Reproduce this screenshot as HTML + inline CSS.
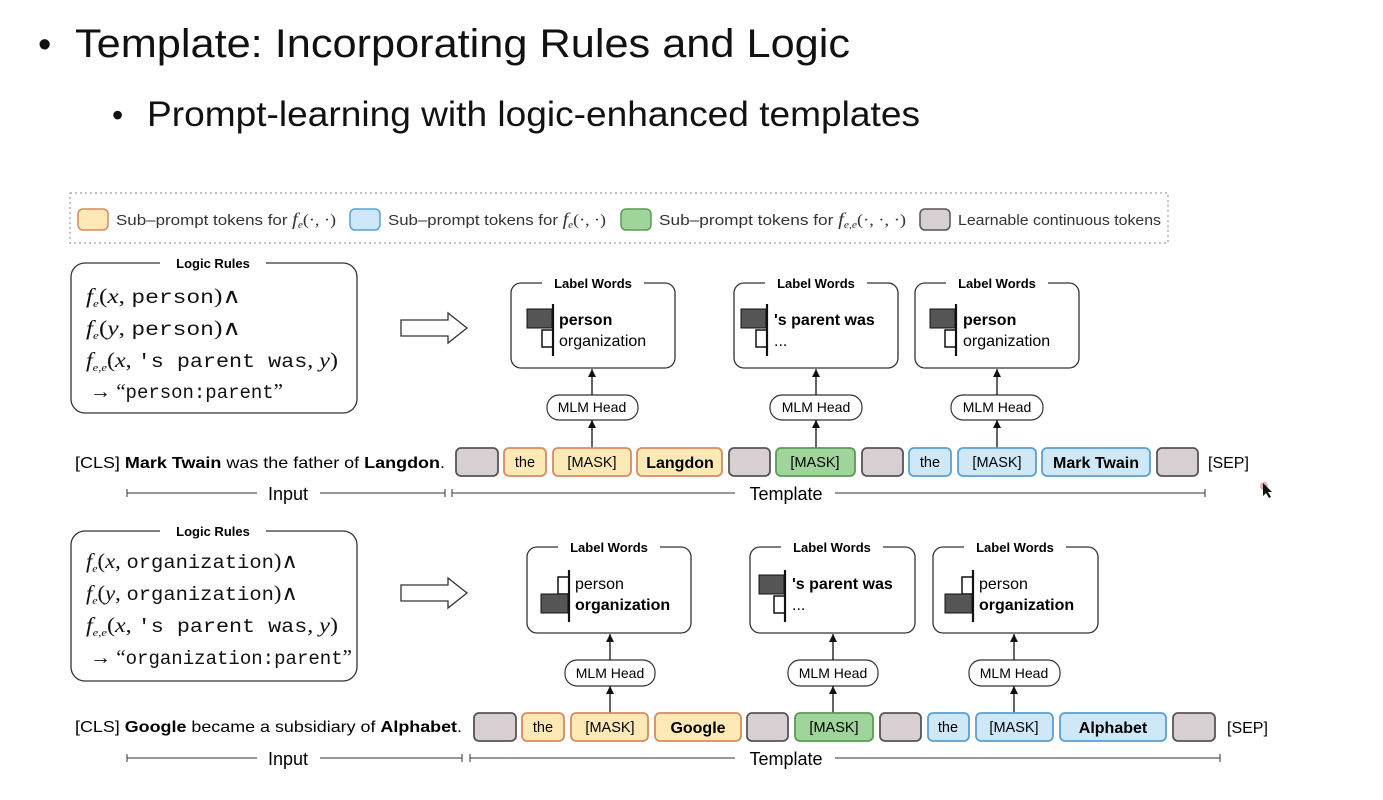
<!DOCTYPE html>
<html><head><meta charset="utf-8"><style>
html,body{margin:0;padding:0;background:#fff;width:1383px;height:800px;overflow:hidden}
svg{display:block}
.s{font-family:"Liberation Sans",sans-serif}
.m{font-family:"Liberation Mono",monospace}
.r{font-family:"Liberation Serif",serif}
</style></head><body>
<svg width="1383" height="800" viewBox="0 0 1383 800" xmlns="http://www.w3.org/2000/svg">
<defs>
<marker id="ah" markerWidth="10" markerHeight="10" refX="8" refY="4" orient="auto" markerUnits="userSpaceOnUse"><path d="M0,0 L8,4 L0,8 Z" fill="#111"/></marker>
</defs>
<g class="s" fill="#111">
<text x="38" y="57" font-size="38">•</text>
<text x="75" y="57" font-size="40" textLength="775" lengthAdjust="spacingAndGlyphs">Template: Incorporating Rules and Logic</text>
<text x="112" y="126" font-size="32">•</text>
<text x="147" y="126" font-size="35" textLength="773" lengthAdjust="spacingAndGlyphs">Prompt-learning with logic-enhanced templates</text>
</g>

<!-- legend -->
<rect x="70" y="193" width="1098" height="50" fill="none" stroke="#888" stroke-dasharray="2,3"/>
<g class="s" font-size="15" fill="#333">
<rect x="78" y="209" width="30" height="21" rx="5" fill="#fde9b5" stroke="#d98a5e" stroke-width="1.5"/>
<text x="116" y="225" textLength="220" lengthAdjust="spacingAndGlyphs">Sub–prompt tokens for <tspan class="r" font-style="italic" font-size="18">f</tspan><tspan class="r" font-style="italic" font-size="10" dy="3">e</tspan><tspan dy="-3" class="r" font-size="16">(·, ·)</tspan></text>
<rect x="350" y="209" width="30" height="21" rx="5" fill="#cfe8f7" stroke="#5a9fd4" stroke-width="1.5"/>
<text x="388" y="225" textLength="218" lengthAdjust="spacingAndGlyphs">Sub–prompt tokens for <tspan class="r" font-style="italic" font-size="18">f</tspan><tspan class="r" font-style="italic" font-size="10" dy="3">e</tspan><tspan dy="-3" class="r" font-size="16">(·, ·)</tspan></text>
<rect x="621" y="209" width="30" height="21" rx="5" fill="#9fd49a" stroke="#5a9a55" stroke-width="1.5"/>
<text x="659" y="225" textLength="247" lengthAdjust="spacingAndGlyphs">Sub–prompt tokens for <tspan class="r" font-style="italic" font-size="18">f</tspan><tspan class="r" font-style="italic" font-size="10" dy="3">e,e</tspan><tspan dy="-3" class="r" font-size="16">(·, ·, ·)</tspan></text>
<rect x="920" y="209" width="30" height="21" rx="5" fill="#d8cfd3" stroke="#555" stroke-width="1.5"/>
<text x="958" y="225" textLength="203" lengthAdjust="spacingAndGlyphs">Learnable continuous tokens</text>
</g>

<!-- ===== TOP HALF ===== -->
<rect x="71" y="263" width="286" height="150" rx="14" fill="none" stroke="#333" stroke-width="1.3"/>
<rect x="160" y="255" width="106" height="16" fill="#fff"/>
<text x="213" y="268" class="s" font-size="13" font-weight="bold" text-anchor="middle">Logic Rules</text>
<g font-size="21" fill="#111">
<text x="86" y="303" textLength="155" lengthAdjust="spacingAndGlyphs"><tspan class="r" font-style="italic">f</tspan><tspan class="r" font-style="italic" font-size="11" dy="4">e</tspan><tspan class="r" dy="-4">(</tspan><tspan class="r" font-style="italic">x</tspan><tspan class="r">, </tspan><tspan class="m" font-size="19">person</tspan><tspan class="r">)∧</tspan></text>
<text x="86" y="335" textLength="155" lengthAdjust="spacingAndGlyphs"><tspan class="r" font-style="italic">f</tspan><tspan class="r" font-style="italic" font-size="11" dy="4">e</tspan><tspan class="r" dy="-4">(</tspan><tspan class="r" font-style="italic">y</tspan><tspan class="r">, </tspan><tspan class="m" font-size="19">person</tspan><tspan class="r">)∧</tspan></text>
<text x="86" y="367" textLength="252" lengthAdjust="spacingAndGlyphs"><tspan class="r" font-style="italic">f</tspan><tspan class="r" font-style="italic" font-size="11" dy="4">e,e</tspan><tspan class="r" dy="-4">(</tspan><tspan class="r" font-style="italic">x</tspan><tspan class="r">, </tspan><tspan class="m" font-size="19">'s parent was</tspan><tspan class="r">, </tspan><tspan class="r" font-style="italic">y</tspan><tspan class="r">)</tspan></text>
<text x="90" y="398" textLength="193" lengthAdjust="spacingAndGlyphs"><tspan class="r">→ “</tspan><tspan class="m" font-size="19">person:parent</tspan><tspan class="r">”</tspan></text>
</g>
<path d="M401,320 H448 V313 L467,328 L448,343 V336 H401 Z" fill="#fff" stroke="#333" stroke-width="1.3"/>

<g class="s">
<rect x="511" y="283" width="164" height="85" rx="10" fill="none" stroke="#333" stroke-width="1.3"/>
<rect x="542" y="275" width="102" height="16" fill="#fff"/>
<text x="593" y="288" font-size="13" font-weight="bold" text-anchor="middle">Label Words</text>
<rect x="527" y="309" width="25" height="19" fill="#555" stroke="#111"/>
<rect x="542" y="330" width="11" height="17" fill="#fff" stroke="#111" stroke-width="1.5"/>
<line x1="553" y1="304" x2="553" y2="356" stroke="#111" stroke-width="2.2"/>
<text x="559" y="325" font-size="16" font-weight="bold">person</text>
<text x="559" y="346" font-size="16">organization</text>

<rect x="734" y="283" width="164" height="85" rx="10" fill="none" stroke="#333" stroke-width="1.3"/>
<rect x="765" y="275" width="102" height="16" fill="#fff"/>
<text x="816" y="288" font-size="13" font-weight="bold" text-anchor="middle">Label Words</text>
<rect x="741" y="309" width="25" height="19" fill="#555" stroke="#111"/>
<rect x="756" y="330" width="11" height="17" fill="#fff" stroke="#111" stroke-width="1.5"/>
<line x1="767" y1="304" x2="767" y2="356" stroke="#111" stroke-width="2.2"/>
<text x="774" y="325" font-size="16" font-weight="bold">'s parent was</text>
<text x="774" y="346" font-size="16">...</text>

<rect x="915" y="283" width="164" height="85" rx="10" fill="none" stroke="#333" stroke-width="1.3"/>
<rect x="946" y="275" width="102" height="16" fill="#fff"/>
<text x="997" y="288" font-size="13" font-weight="bold" text-anchor="middle">Label Words</text>
<rect x="930" y="309" width="25" height="19" fill="#555" stroke="#111"/>
<rect x="945" y="330" width="11" height="17" fill="#fff" stroke="#111" stroke-width="1.5"/>
<line x1="956" y1="304" x2="956" y2="356" stroke="#111" stroke-width="2.2"/>
<text x="963" y="325" font-size="16" font-weight="bold">person</text>
<text x="963" y="346" font-size="16">organization</text>

<g font-size="14">
<rect x="547" y="395" width="91" height="25" rx="12" fill="#fff" stroke="#333" stroke-width="1.2"/>
<text x="592" y="412" text-anchor="middle">MLM Head</text>
<rect x="770" y="395" width="92" height="25" rx="12" fill="#fff" stroke="#333" stroke-width="1.2"/>
<text x="816" y="412" text-anchor="middle">MLM Head</text>
<rect x="951" y="395" width="92" height="25" rx="12" fill="#fff" stroke="#333" stroke-width="1.2"/>
<text x="997" y="412" text-anchor="middle">MLM Head</text>
</g>
<g stroke="#111" stroke-width="1.3" marker-end="url(#ah)">
<line x1="592" y1="395" x2="592" y2="369"/><line x1="592" y1="448" x2="592" y2="420"/>
<line x1="816" y1="395" x2="816" y2="369"/><line x1="816" y1="448" x2="816" y2="420"/>
<line x1="997" y1="395" x2="997" y2="369"/><line x1="997" y1="448" x2="997" y2="420"/>
</g>

<text x="75" y="468" font-size="16" textLength="370" lengthAdjust="spacingAndGlyphs">[CLS]  <tspan font-weight="bold">Mark Twain</tspan> was the father of <tspan font-weight="bold">Langdon</tspan>.</text>
<g stroke-width="1.8">
<rect x="456" y="448" width="42" height="28" rx="5" fill="#d8cfd3" stroke="#555"/>
<rect x="504" y="448" width="42" height="28" rx="5" fill="#fde9b5" stroke="#d98a5e"/>
<rect x="553" y="448" width="78" height="28" rx="5" fill="#fde9b5" stroke="#d98a5e"/>
<rect x="637" y="448" width="85" height="28" rx="5" fill="#fde9b5" stroke="#d98a5e"/>
<rect x="729" y="448" width="41" height="28" rx="5" fill="#d8cfd3" stroke="#555"/>
<rect x="776" y="448" width="79" height="28" rx="5" fill="#9fd49a" stroke="#5a9a55"/>
<rect x="862" y="448" width="41" height="28" rx="5" fill="#d8cfd3" stroke="#555"/>
<rect x="909" y="448" width="42" height="28" rx="5" fill="#cfe8f7" stroke="#5a9fd4"/>
<rect x="958" y="448" width="78" height="28" rx="5" fill="#cfe8f7" stroke="#5a9fd4"/>
<rect x="1042" y="448" width="108" height="28" rx="5" fill="#cfe8f7" stroke="#5a9fd4"/>
<rect x="1157" y="448" width="41" height="28" rx="5" fill="#d8cfd3" stroke="#555"/>
</g>
<g font-size="14.5" text-anchor="middle">
<text x="525" y="467">the</text><text x="592" y="467">[MASK]</text>
<text x="680" y="468" font-size="16" font-weight="bold">Langdon</text>
<text x="815" y="467">[MASK]</text><text x="930" y="467">the</text><text x="997" y="467">[MASK]</text>
<text x="1096" y="468" font-size="16" font-weight="bold">Mark Twain</text>
</g>
<text x="1208" y="468" font-size="16">[SEP]</text>
<g stroke="#333" stroke-width="1">
<line x1="127" y1="493" x2="257" y2="493"/><line x1="127" y1="489" x2="127" y2="497"/>
<line x1="320" y1="493" x2="445" y2="493"/><line x1="445" y1="489" x2="445" y2="497"/>
<line x1="452" y1="493" x2="735" y2="493"/><line x1="452" y1="489" x2="452" y2="497"/>
<line x1="835" y1="493" x2="1205" y2="493"/><line x1="1205" y1="489" x2="1205" y2="497"/>
</g>
<text x="288" y="500" font-size="18" text-anchor="middle">Input</text>
<text x="786" y="500" font-size="18" text-anchor="middle">Template</text>
</g>

<!-- ===== BOTTOM HALF ===== -->
<rect x="71" y="531" width="286" height="150" rx="14" fill="none" stroke="#333" stroke-width="1.3"/>
<rect x="160" y="523" width="106" height="16" fill="#fff"/>
<text x="213" y="536" class="s" font-size="13" font-weight="bold" text-anchor="middle">Logic Rules</text>
<g font-size="21" fill="#111">
<text x="86" y="568" textLength="212" lengthAdjust="spacingAndGlyphs"><tspan class="r" font-style="italic">f</tspan><tspan class="r" font-style="italic" font-size="11" dy="4">e</tspan><tspan class="r" dy="-4">(</tspan><tspan class="r" font-style="italic">x</tspan><tspan class="r">, </tspan><tspan class="m" font-size="19">organization</tspan><tspan class="r">)∧</tspan></text>
<text x="86" y="600" textLength="212" lengthAdjust="spacingAndGlyphs"><tspan class="r" font-style="italic">f</tspan><tspan class="r" font-style="italic" font-size="11" dy="4">e</tspan><tspan class="r" dy="-4">(</tspan><tspan class="r" font-style="italic">y</tspan><tspan class="r">, </tspan><tspan class="m" font-size="19">organization</tspan><tspan class="r">)∧</tspan></text>
<text x="86" y="632" textLength="252" lengthAdjust="spacingAndGlyphs"><tspan class="r" font-style="italic">f</tspan><tspan class="r" font-style="italic" font-size="11" dy="4">e,e</tspan><tspan class="r" dy="-4">(</tspan><tspan class="r" font-style="italic">x</tspan><tspan class="r">, </tspan><tspan class="m" font-size="19">'s parent was</tspan><tspan class="r">, </tspan><tspan class="r" font-style="italic">y</tspan><tspan class="r">)</tspan></text>
<text x="90" y="664" textLength="262" lengthAdjust="spacingAndGlyphs"><tspan class="r">→ “</tspan><tspan class="m" font-size="19">organization:parent</tspan><tspan class="r">”</tspan></text>
</g>
<path d="M401,585 H448 V578 L467,593 L448,608 V601 H401 Z" fill="#fff" stroke="#333" stroke-width="1.3"/>

<g class="s">
<rect x="527" y="547" width="164" height="86" rx="10" fill="none" stroke="#333" stroke-width="1.3"/>
<rect x="558" y="539" width="102" height="16" fill="#fff"/>
<text x="609" y="552" font-size="13" font-weight="bold" text-anchor="middle">Label Words</text>
<rect x="558" y="577" width="11" height="17" fill="#fff" stroke="#111" stroke-width="1.5"/>
<rect x="541" y="594" width="27" height="19" fill="#555" stroke="#111"/>
<line x1="569" y1="570" x2="569" y2="622" stroke="#111" stroke-width="2.2"/>
<text x="575" y="589" font-size="16">person</text>
<text x="575" y="610" font-size="16" font-weight="bold">organization</text>

<rect x="750" y="547" width="165" height="86" rx="10" fill="none" stroke="#333" stroke-width="1.3"/>
<rect x="781" y="539" width="102" height="16" fill="#fff"/>
<text x="832" y="552" font-size="13" font-weight="bold" text-anchor="middle">Label Words</text>
<rect x="759" y="575" width="25" height="19" fill="#555" stroke="#111"/>
<rect x="774" y="596" width="11" height="17" fill="#fff" stroke="#111" stroke-width="1.5"/>
<line x1="785" y1="570" x2="785" y2="622" stroke="#111" stroke-width="2.2"/>
<text x="792" y="589" font-size="16" font-weight="bold">'s parent was</text>
<text x="792" y="610" font-size="16">...</text>

<rect x="933" y="547" width="165" height="86" rx="10" fill="none" stroke="#333" stroke-width="1.3"/>
<rect x="964" y="539" width="102" height="16" fill="#fff"/>
<text x="1015" y="552" font-size="13" font-weight="bold" text-anchor="middle">Label Words</text>
<rect x="962" y="577" width="11" height="17" fill="#fff" stroke="#111" stroke-width="1.5"/>
<rect x="945" y="594" width="27" height="19" fill="#555" stroke="#111"/>
<line x1="973" y1="570" x2="973" y2="622" stroke="#111" stroke-width="2.2"/>
<text x="979" y="589" font-size="16">person</text>
<text x="979" y="610" font-size="16" font-weight="bold">organization</text>

<g font-size="14">
<rect x="565" y="660" width="90" height="26" rx="12" fill="#fff" stroke="#333" stroke-width="1.2"/>
<text x="610" y="678" text-anchor="middle">MLM Head</text>
<rect x="788" y="660" width="90" height="26" rx="12" fill="#fff" stroke="#333" stroke-width="1.2"/>
<text x="833" y="678" text-anchor="middle">MLM Head</text>
<rect x="969" y="660" width="91" height="26" rx="12" fill="#fff" stroke="#333" stroke-width="1.2"/>
<text x="1014" y="678" text-anchor="middle">MLM Head</text>
</g>
<g stroke="#111" stroke-width="1.3" marker-end="url(#ah)">
<line x1="610" y1="660" x2="610" y2="634"/><line x1="610" y1="713" x2="610" y2="686"/>
<line x1="833" y1="660" x2="833" y2="634"/><line x1="833" y1="713" x2="833" y2="686"/>
<line x1="1014" y1="660" x2="1014" y2="634"/><line x1="1014" y1="713" x2="1014" y2="686"/>
</g>

<text x="75" y="732" font-size="16" textLength="387" lengthAdjust="spacingAndGlyphs">[CLS]  <tspan font-weight="bold">Google</tspan> became a subsidiary of <tspan font-weight="bold">Alphabet</tspan>.</text>
<g stroke-width="1.8">
<rect x="474" y="713" width="42" height="28" rx="5" fill="#d8cfd3" stroke="#555"/>
<rect x="522" y="713" width="42" height="28" rx="5" fill="#fde9b5" stroke="#d98a5e"/>
<rect x="571" y="713" width="77" height="28" rx="5" fill="#fde9b5" stroke="#d98a5e"/>
<rect x="655" y="713" width="86" height="28" rx="5" fill="#fde9b5" stroke="#d98a5e"/>
<rect x="747" y="713" width="41" height="28" rx="5" fill="#d8cfd3" stroke="#555"/>
<rect x="795" y="713" width="78" height="28" rx="5" fill="#9fd49a" stroke="#5a9a55"/>
<rect x="880" y="713" width="41" height="28" rx="5" fill="#d8cfd3" stroke="#555"/>
<rect x="928" y="713" width="41" height="28" rx="5" fill="#cfe8f7" stroke="#5a9fd4"/>
<rect x="976" y="713" width="77" height="28" rx="5" fill="#cfe8f7" stroke="#5a9fd4"/>
<rect x="1060" y="713" width="106" height="28" rx="5" fill="#cfe8f7" stroke="#5a9fd4"/>
<rect x="1173" y="713" width="42" height="28" rx="5" fill="#d8cfd3" stroke="#555"/>
</g>
<g font-size="14.5" text-anchor="middle">
<text x="543" y="732">the</text><text x="610" y="732">[MASK]</text>
<text x="698" y="733" font-size="16" font-weight="bold">Google</text>
<text x="834" y="732">[MASK]</text><text x="948" y="732">the</text><text x="1014" y="732">[MASK]</text>
<text x="1113" y="733" font-size="16" font-weight="bold">Alphabet</text>
</g>
<text x="1227" y="733" font-size="16">[SEP]</text>
<g stroke="#333" stroke-width="1">
<line x1="127" y1="758" x2="257" y2="758"/><line x1="127" y1="754" x2="127" y2="762"/>
<line x1="320" y1="758" x2="462" y2="758"/><line x1="462" y1="754" x2="462" y2="762"/>
<line x1="470" y1="758" x2="735" y2="758"/><line x1="470" y1="754" x2="470" y2="762"/>
<line x1="835" y1="758" x2="1220" y2="758"/><line x1="1220" y1="754" x2="1220" y2="762"/>
</g>
<text x="288" y="765" font-size="18" text-anchor="middle">Input</text>
<text x="786" y="765" font-size="18" text-anchor="middle">Template</text>
</g>
<circle cx="1264" cy="486" r="4" fill="#e88" opacity="0.7"/>
<path d="M1263,483 L1263,496 L1266,493 L1269,498 L1271,497 L1268,492 L1272,492 Z" fill="#111"/>
</svg>
</body></html>
